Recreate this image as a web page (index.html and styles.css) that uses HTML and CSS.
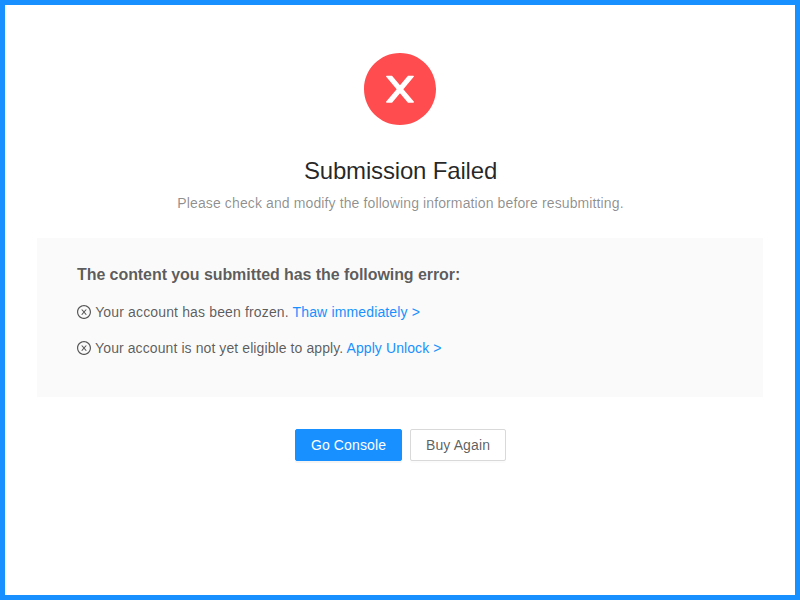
FILE: index.html
```html
<!DOCTYPE html>
<html lang="en">
<head>
<meta charset="utf-8">
<title>Submission Failed</title>
<link rel="stylesheet" href="styles.css">
</head>
<body>
<main class="result">
  <div class="result-icon">
    <svg viewBox="64 64 896 896" width="72" height="72" fill="currentColor" aria-hidden="true"><path d="M512 64C264.6 64 64 264.600 64 512s200.600 448 448 448 448-200.600 448-448S759.400 64 512 64zm165.400 618.200l-66-.3L512 563.400l-99.300 118.400-66.100.3c-4.400 0-8-3.500-8-8 0-1.900.7-3.700 1.900-5.200l130.100-155L340.500 359a8.320 8.320 0 0 1-1.900-5.200c0-4.400 3.600-8 8-8l66.100.3L512 464.600l99.300-118.400 66-.3c4.400 0 8 3.500 8 8 0 1.900-.7 3.700-1.900 5.200L553.500 514l130 155c1.200 1.500 1.900 3.300 1.900 5.200 0 4.400-3.600 8-8 8z"/></svg>
  </div>
  <div class="result-title">Submission Failed</div>
  <div class="result-subtitle">Please check and modify the following information before resubmitting.</div>
  <div class="result-content">
    <p class="heading"><strong>The content you submitted has the following error:</strong></p>
    <p class="error">
      <svg class="error-icon" viewBox="64 64 896 896" width="14" height="14" fill="currentColor" aria-hidden="true"><path d="M685.400 354.800c0-4.400-3.600-8-8-8l-66 .3L512 465.600l-99.300-118.400-66.100-.3c-4.400 0-8 3.500-8 8 0 1.900.7 3.700 1.900 5.200l130.100 155L340.500 670a8.320 8.320 0 0 0-1.900 5.200c0 4.400 3.600 8 8 8l66.100-.3L512 564.400l99.300 118.400 66 .3c4.400 0 8-3.500 8-8 0-1.900-.7-3.700-1.900-5.200L553.500 515l130.100-155c1.200-1.400 1.800-3.300 1.800-5.200z"/><path d="M512 65C264.600 65 64 265.600 64 513s200.600 448 448 448 448-200.600 448-448S759.400 65 512 65zm0 820c-205.400 0-372-166.600-372-372s166.600-372 372-372 372 166.600 372 372-166.600 372-372 372z"/></svg>
      Your account has been frozen. <a>Thaw immediately &gt;</a>
    </p>
    <p class="error">
      <svg class="error-icon" viewBox="64 64 896 896" width="14" height="14" fill="currentColor" aria-hidden="true"><path d="M685.400 354.800c0-4.400-3.600-8-8-8l-66 .3L512 465.600l-99.300-118.400-66.100-.3c-4.400 0-8 3.500-8 8 0 1.900.7 3.700 1.900 5.200l130.100 155L340.500 670a8.320 8.320 0 0 0-1.900 5.200c0 4.400 3.600 8 8 8l66.100-.3L512 564.400l99.300 118.400 66 .3c4.400 0 8-3.500 8-8 0-1.900-.7-3.700-1.900-5.200L553.500 515l130.100-155c1.200-1.400 1.800-3.300 1.800-5.200z"/><path d="M512 65C264.600 65 64 265.600 64 513s200.600 448 448 448 448-200.600 448-448S759.400 65 512 65zm0 820c-205.400 0-372-166.600-372-372s166.600-372 372-372 372 166.600 372 372-166.600 372-372 372z"/></svg>
      Your account is not yet eligible to apply. <a>Apply Unlock &gt;</a>
    </p>
  </div>
  <div class="result-extra">
    <button class="btn btn-primary">Go Console</button>
    <button class="btn">Buy Again</button>
  </div>
</main>
</body>
</html>
```
FILE: styles.css
```css
* { box-sizing: border-box; }
body {
  margin: 0;
  min-height: 100vh;
  border: 5px solid #1890ff;
  background: #fff;
  color: rgba(0, 0, 0, .65);
  font: 14px/1.5715 "Liberation Sans", Arial, sans-serif;
}
.result { padding: 48px 32px; }
.result-icon {
  height: 72px;
  margin-bottom: 24px;
  display: flex;
  justify-content: center;
  color: #ff4d4f;
}
.result-title {
  padding-left: 1px;
  color: rgba(0, 0, 0, .85);
  font-size: 24px;
  line-height: 43.2px;
  letter-spacing: -.17px;
  text-align: center;
}
.result-subtitle {
  padding-left: 1px;
  color: rgba(0, 0, 0, .45);
  line-height: 22px;
  letter-spacing: .117px;
  text-align: center;
}
.result-content {
  margin-top: 24px;
  padding: 24px 40px;
  background: #fafafa;
}
p { margin: 0 0 14px; }
.heading { font-size: 16px; line-height: 25px; letter-spacing: -.07px; }
.error { line-height: 22px; letter-spacing: .145px; }
.error + .error { letter-spacing: .09px; }
.error-icon { display: inline-block; margin-right: .4px; vertical-align: -1.75px; }
.error a { color: #1890ff; }
.result-extra {
  margin-top: 32px;
  display: flex;
  justify-content: center;
  gap: 8px;
}
.btn {
  height: 32px;
  width: 96px;
  padding: 0 0 0 1px;
  border: 1px solid #d9d9d9;
  border-radius: 2px;
  background: #fff;
  color: rgba(0, 0, 0, .65);
  font: inherit;
  letter-spacing: .12px;
  box-shadow: 0 2px 0 rgba(0, 0, 0, .015);
}
.btn-primary {
  width: 107px;
  border-color: #1890ff;
  background: #1890ff;
  color: #fff;
  box-shadow: 0 2px 0 rgba(0, 0, 0, .045);
}
```
